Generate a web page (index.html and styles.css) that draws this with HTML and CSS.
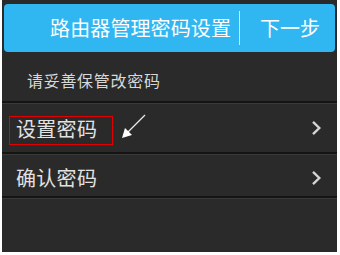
FILE: index.html
```html
<!DOCTYPE html>
<html lang="zh-CN">
<head>
<meta charset="utf-8">
<link rel="stylesheet" href="styles.css">
</head>
<body>
<div class="panel">
  <div class="header">
    <span class="title">路由器管理密码设置</span>
    <span class="sep"></span>
    <span class="next">下一步</span>
  </div>
  <div class="hint">请妥善保管改密码</div>
  <div class="divider"></div>
  <div class="row">
    <span class="label">设置密码</span>
    <svg class="chev" width="11" height="16" viewBox="0 0 11 16"><path d="M2 1.8 L8.3 8 L2 14.2" fill="none" stroke="#d4d4d4" stroke-width="2.4"/></svg>
    <span class="mark"></span>
    <svg class="arrow" width="28" height="28" viewBox="0 0 28 28"><line x1="25" y1="2" x2="8" y2="19" stroke="#e8e8e8" stroke-width="1.3"/><polygon points="2,25 5,15 12,22" fill="#ffffff"/></svg>
  </div>
  <div class="divider"></div>
  <div class="row row-last">
    <span class="label">确认密码</span>
    <svg class="chev" width="11" height="16" viewBox="0 0 11 16"><path d="M2 1.8 L8.3 8 L2 14.2" fill="none" stroke="#d4d4d4" stroke-width="2.4"/></svg>
  </div>
  <div class="divider"></div>
</div>
</body>
</html>
```
FILE: styles.css
```css
html, body {
  margin: 0;
  padding: 0;
  background: #ffffff;
}
body {
  font-family: "Noto Sans CJK SC", "Noto Sans", sans-serif;
}
.panel {
  width: 335px;
  height: 252px;
  margin-left: 2px;
  background: #2a2a2a;
  padding-top: 4px;
  box-sizing: border-box;
  overflow: hidden;
}
.header {
  margin: 0 2px;
  height: 48px;
  background: #30b6f1;
  border-radius: 4px;
  display: flex;
  align-items: center;
  justify-content: flex-end;
  padding-right: 15px;
  color: #ffffff;
  font-size: 20px;
  line-height: 1;
}
.title {
  letter-spacing: 0.1px;
}
.sep {
  width: 1px;
  height: 34px;
  background: #d6effb;
  margin: 0 20px 0 8px;
}
.hint {
  height: 49px;
  display: flex;
  align-items: center;
  padding-left: 25px;
  padding-top: 7px;
  box-sizing: border-box;
  font-size: 16px;
  letter-spacing: 0.7px;
  color: #d8d8d8;
}
.divider {
  height: 2px;
  background: #141414;
  border-bottom: 1px solid #3a3a3a;
}
.row {
  position: relative;
  height: 48px;
  display: flex;
  align-items: center;
  justify-content: space-between;
  padding: 0 15px 0 14px;
  box-sizing: border-box;
  font-size: 20px;
  color: #e2e2e2;
}
.row-last {
  height: 41px;
  padding-top: 4px;
}
.label {
  letter-spacing: 0.3px;
}
.mark {
  position: absolute;
  left: 7px;
  top: 12px;
  width: 102px;
  height: 27px;
  border: 1.5px solid #e20000;
}
.arrow {
  position: absolute;
  left: 118px;
  top: 9px;
}
```
